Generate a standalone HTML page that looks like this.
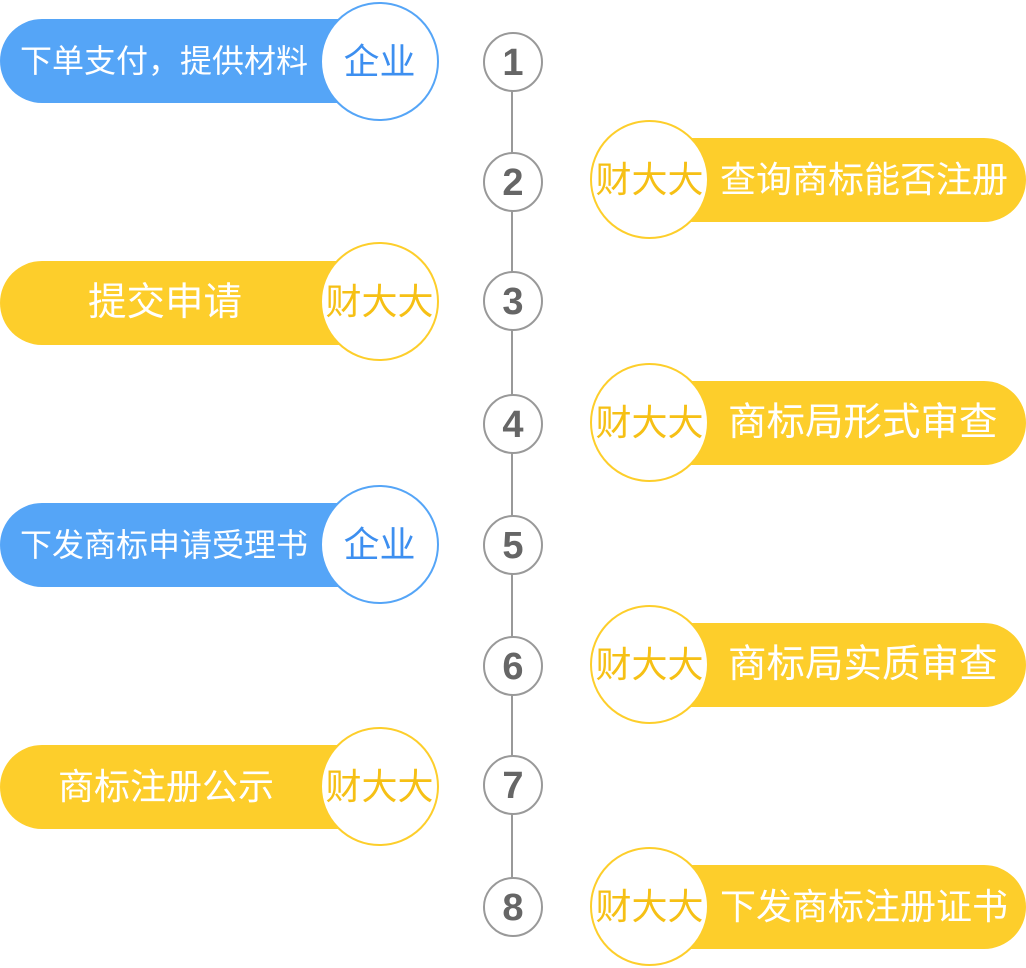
<!DOCTYPE html>
<html><head><meta charset="utf-8"><style>
body{margin:0;width:1026px;height:968px;background:#fff;position:relative;overflow:hidden;font-family:"Liberation Sans","Noto Sans CJK SC",sans-serif}
.p{position:absolute;height:84px;color:#fff;font-size:36px;line-height:84px;white-space:nowrap;box-sizing:border-box}
.c{position:absolute;width:115px;height:115px;border-radius:50%;background:#fff;border:2.5px solid;text-align:center;line-height:115px;font-size:36px}
.n{position:absolute;left:483px;width:56px;height:56px;border:2px solid #999;border-radius:50%;background:#fff;text-align:center;line-height:58px;font-size:38px;font-weight:bold;color:#666}
.b{background:#55a5f7}.y{background:#fdce2b}
.cb{border-color:#55a5f7;color:#3d8ff0}.cy{border-color:#fdce2b;color:#f6c015}
.L{left:0;width:340px;border-radius:42px 0 0 42px}
.R{left:650px;width:376px;border-radius:0 42px 42px 0}
</style></head><body>
<div style="position:absolute;left:511px;top:61px;width:2px;height:845px;background:#999"></div>

<div class="p b L" style="top:19px;padding-left:20px;font-size:32px">下单支付，提供材料</div>
<div class="c cb" style="left:320px;top:2px">企业</div>

<div class="p y R" style="top:138px;padding-left:70px">查询商标能否注册</div>
<div class="c cy" style="left:590px;top:120px">财大大</div>

<div class="p y L" style="top:261px;padding-left:88px;font-size:38.5px">提交申请</div>
<div class="c cy" style="left:320px;top:242px">财大大</div>

<div class="p y R" style="top:381px;padding-left:78px;font-size:38.5px">商标局形式审查</div>
<div class="c cy" style="left:590px;top:363px">财大大</div>

<div class="p b L" style="top:503px;padding-left:20px;font-size:32px">下发商标申请受理书</div>
<div class="c cb" style="left:320px;top:485px">企业</div>

<div class="p y R" style="top:623px;padding-left:78px;font-size:38.5px">商标局实质审查</div>
<div class="c cy" style="left:590px;top:605px">财大大</div>

<div class="p y L" style="top:745px;padding-left:58px">商标注册公示</div>
<div class="c cy" style="left:320px;top:727px">财大大</div>

<div class="p y R" style="top:865px;padding-left:70px">下发商标注册证书</div>
<div class="c cy" style="left:590px;top:847px">财大大</div>

<div class="n" style="top:32px">1</div>
<div class="n" style="top:152px">2</div>
<div class="n" style="top:271px">3</div>
<div class="n" style="top:394px">4</div>
<div class="n" style="top:515px">5</div>
<div class="n" style="top:636px">6</div>
<div class="n" style="top:755px">7</div>
<div class="n" style="top:877px">8</div>
</body></html>
